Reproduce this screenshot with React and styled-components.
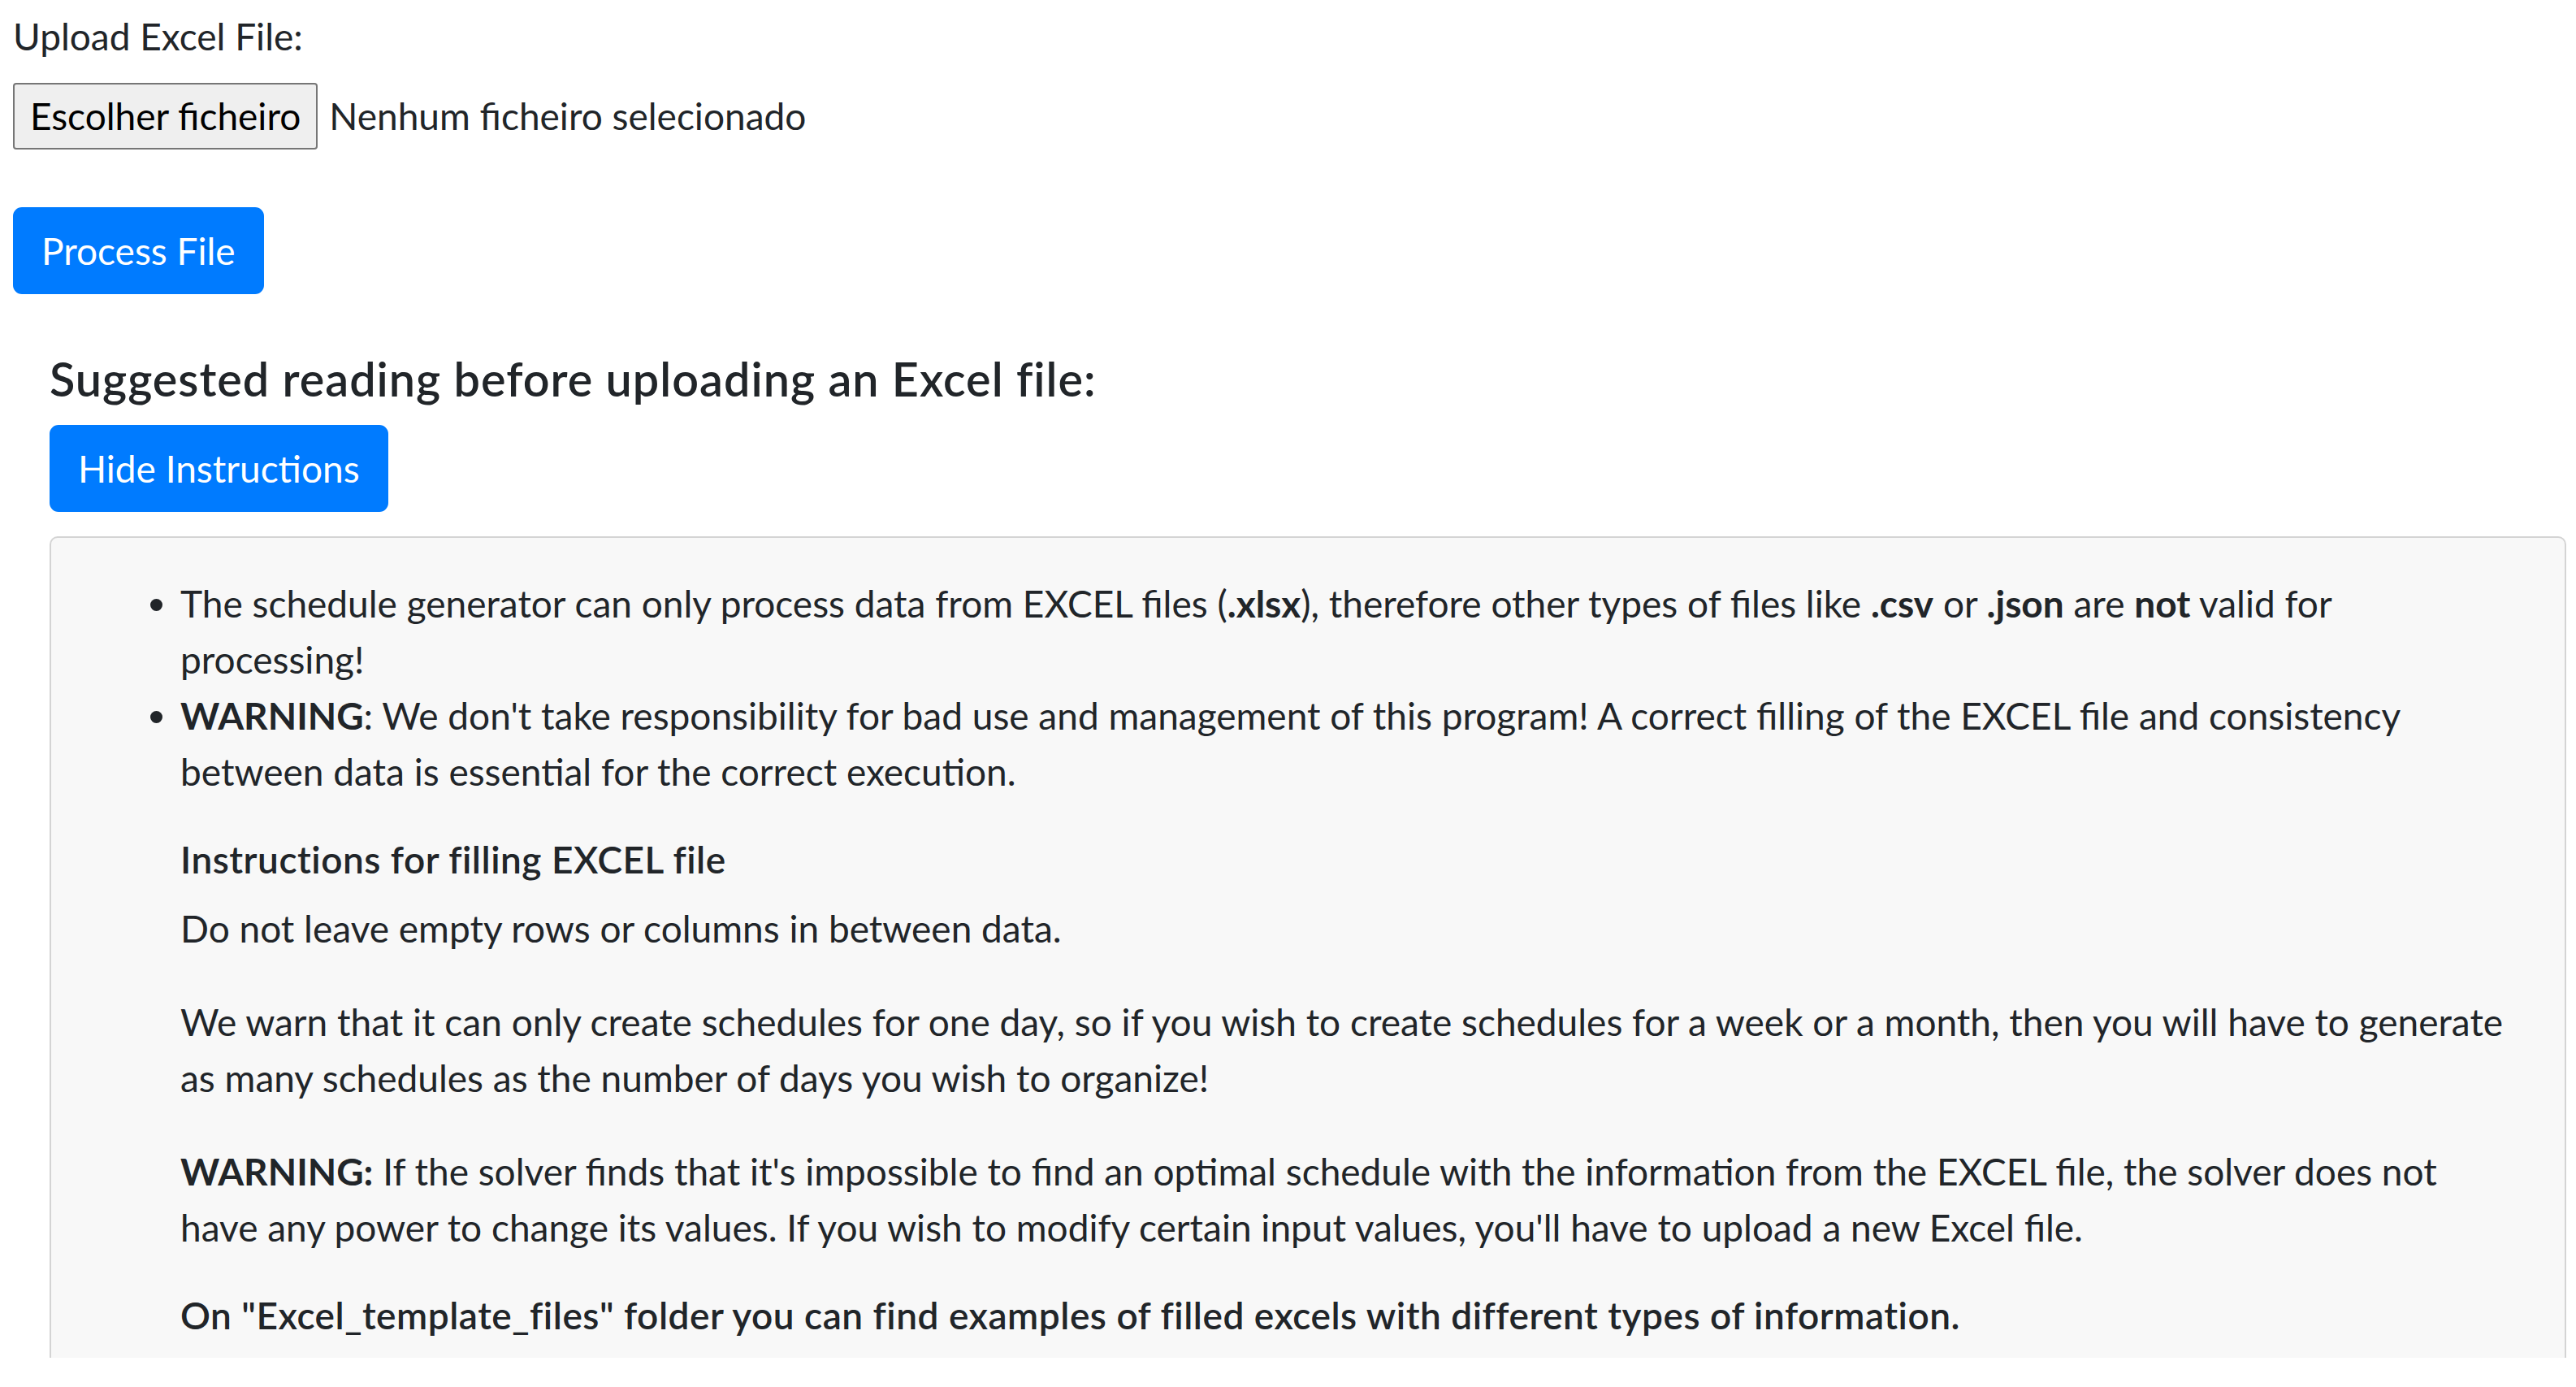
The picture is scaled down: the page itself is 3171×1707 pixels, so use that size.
import React from 'react';
import styled, { createGlobalStyle } from 'styled-components';

const GlobalStyle = createGlobalStyle`
  html, body {
    margin: 0;
    padding: 0;
    background: #fff;
  }
  body {
    font-family: Lato, "Open Sans", "Liberation Sans", sans-serif;
    font-size: 46px;
    line-height: 69px;
    color: #212529;
  }
  * {
    box-sizing: border-box;
  }
`;

const Page = styled.div`
  height: 1671px;
  overflow: hidden;
  padding: 10px 12px 0 16px;
`;

const Label = styled.label`
  display: block;
  margin-bottom: 23px;
`;

const FileRow = styled.div`
  display: flex;
  align-items: center;
  gap: 14px;
  height: 81px;
`;

const FileButton = styled.button`
  height: 82px;
  padding: 0 19px;
  font: inherit;
  color: #000;
  background: #efefef;
  border: 2px solid #767676;
  border-radius: 4px;
`;

const Button = styled.button`
  display: inline-block;
  padding: 16px 32px;
  font: inherit;
  line-height: 69px;
  color: #fff;
  background: #007bff;
  border: 3px solid #007bff;
  border-radius: 11px;
`;

const ProcessButton = styled(Button)`
  margin-top: 72px;
`;

const Section = styled.section`
  padding-left: 45px;
`;

const Heading = styled.h5`
  margin: 69px 0 23px;
  font-size: 57.5px;
  font-weight: 600;
  line-height: 69px;
  letter-spacing: 1px;
`;

const Panel = styled.div`
  margin-top: 30px;
  padding: 46px;
  background: #f8f8f8;
  border: 2px solid #d4d4d4;
  border-radius: 10px;
`;

const List = styled.ul`
  margin: 0 0 46px;
  padding-left: 113px;
`;

const Indented = styled.div`
  padding-left: 113px;
`;

const SubHeading = styled.h6`
  margin: 0 0 ${(props) => (props.last ? '0' : '23px')};
  font-size: 46px;
  font-weight: 600;
  line-height: 55px;
  letter-spacing: 0.5px;
`;

const Paragraph = styled.p`
  margin: 0 0 46px;
`;

const App = () => {
  return (
    <Page>
      <GlobalStyle />
      <Label htmlFor="excel">Upload Excel File:</Label>
      <FileRow>
        <FileButton type="button">Escolher ficheiro</FileButton>
        <span>Nenhum ficheiro selecionado</span>
      </FileRow>
      <ProcessButton type="button">Process File</ProcessButton>
      <Section>
        <Heading>Suggested reading before uploading an Excel file:</Heading>
        <Button type="button">Hide Instructions</Button>
        <Panel>
          <List>
            <li>
              The schedule generator can only process data from EXCEL files (<b>.xlsx</b>), therefore other
              types of files like <b>.csv</b> or <b>.json</b> are <b>not</b> valid for
              <br />
              processing!
            </li>
            <li>
              <b>WARNING</b>: We don't take responsibility for bad use and management of this program! A correct
              filling of the EXCEL file and consistency
              <br />
              between data is essential for the correct execution.
            </li>
          </List>
          <Indented>
            <SubHeading>Instructions for filling EXCEL file</SubHeading>
            <Paragraph>Do not leave empty rows or columns in between data.</Paragraph>
            <Paragraph>
              We warn that it can only create schedules for one day, so if you wish to create schedules for a week
              or a month, then you will have to generate
              <br />
              as many schedules as the number of days you wish to organize!
            </Paragraph>
            <Paragraph>
              <b>WARNING:</b> If the solver finds that it's impossible to find an optimal schedule with the
              information from the EXCEL file, the solver does not
              <br />
              have any power to change its values. If you wish to modify certain input values, you'll have to
              upload a new Excel file.
            </Paragraph>
            <SubHeading last>
              On "Excel_template_files" folder you can find examples of filled excels with different types of
              information.
            </SubHeading>
          </Indented>
        </Panel>
      </Section>
    </Page>
  );
};

export default App;
